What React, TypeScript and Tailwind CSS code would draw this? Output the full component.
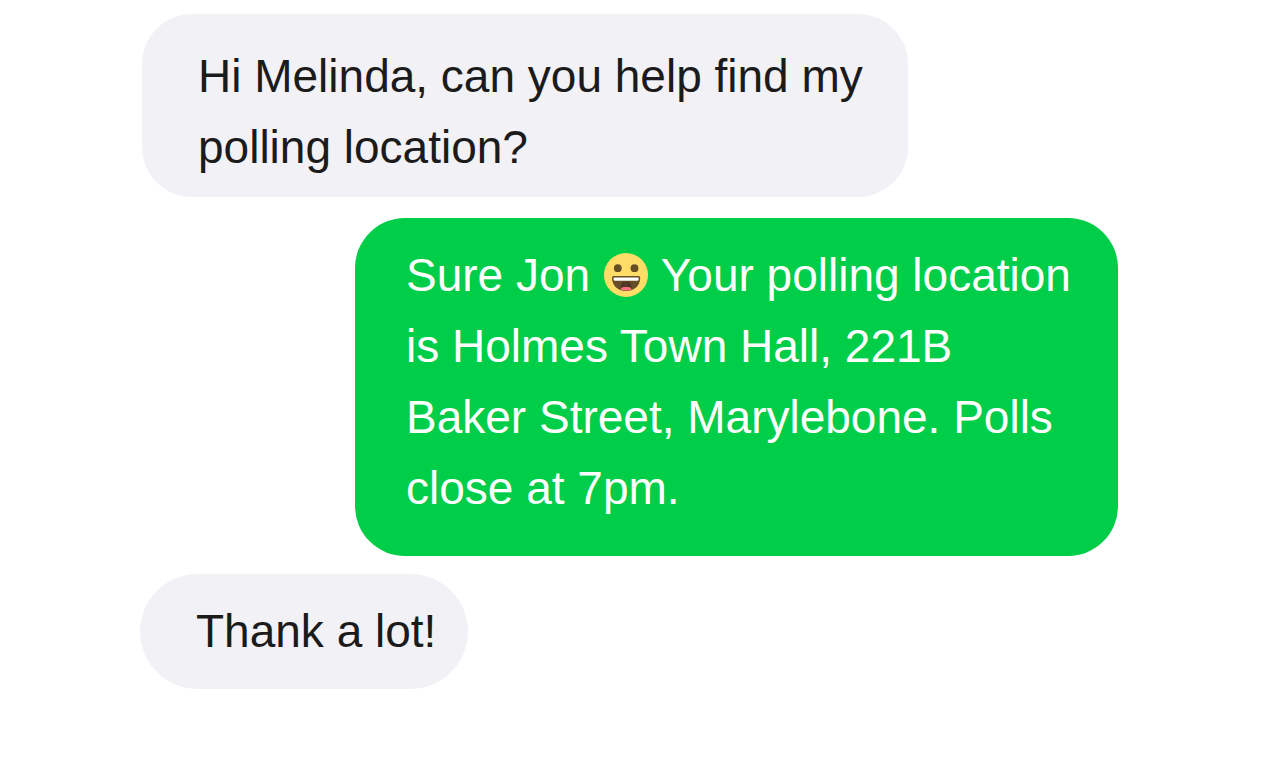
import { type ReactNode } from "react";
import clsx from "clsx";

type BubbleProps = {
  children: ReactNode;
  outgoing?: boolean;
  className?: string;
};

function GrinningFace() {
  return (
    <svg
      viewBox="0 0 44 44"
      role="img"
      aria-label="Grinning face"
      className="mx-px inline-block size-11 align-[-6px]"
    >
      <circle cx="22" cy="22" r="22" fill="#ffdd67" />
      <circle cx="13.8" cy="15.2" r="3.9" fill="#664e27" />
      <circle cx="30.5" cy="15.2" r="3.9" fill="#664e27" />
      {/* Mouth */}
      <path
        d="M9.7 23h24.7c1.1 0 1.8.7 1.8 1.8 0 7.4-5.4 13.2-14.1 13.2S8 32.2 8 24.8c0-1.1.7-1.8 1.7-1.8z"
        fill="#664e27"
      />
      <path
        d="M16.5 36.8c.2-5.6 1.700-8.200 4.200-8.200.7 0 1 .2 1.400.5.400-.3.800-.5 1.500-.5 2.400 0 4 2.600 4.200 8.200z"
        fill="#4c3526"
      />
      <path d="M22 29.2v5" stroke="#664e27" strokeWidth="0.9" />
      <path
        d="M16.5 36.6c.5-2.2 2.7-2.9 5.6-2.3 2.9-.6 5.1.1 5.7 2.3-3.4 1.3-8 1.3-11.3 0z"
        fill="#ff717f"
      />
      {/* Teeth */}
      <path
        d="M10.4 24.4h23.4c.5 0 .8.3.8.8v1.4c0 .7-.4 1.1-1 1.1h-23c-.6 0-1-.4-1-1.100v-1.400c0-.5.3-.8.8-.8z"
        fill="#fff"
      />
    </svg>
  );
}

function Bubble({ children, outgoing = false, className }: BubbleProps) {
  return (
    <li
      className={clsx(
        "text-[46px] leading-[71px]",
        outgoing ? "self-end bg-[#00ce48] text-white" : "self-start bg-[#f2f1f6] text-[#1b1b1b]",
        className,
      )}
    >
      <p>{children}</p>
    </li>
  );
}

export default function App() {
  return (
    <main className="min-h-screen bg-white pt-3.5 pr-[163px] pb-14 pl-[140px] font-['Liberation_Sans',Arial,sans-serif]">
      <ul className="flex flex-col">
        <Bubble className="ml-0.5 w-full max-w-[766px] rounded-[50px] pt-[27px] pr-8 pb-3.5 pl-14">
          Hi Melinda, can you help find my polling location?
        </Bubble>
        <Bubble
          outgoing
          className="mt-[21px] w-full max-w-[763px] rounded-[50px] pt-[22px] pr-10 pb-8 pl-[51px]"
        >
          Sure Jon <GrinningFace /> Your polling location is Holmes Town Hall, 221B Baker Street,
          Marylebone. Polls close at 7pm.
        </Bubble>
        <Bubble className="mt-[18px] rounded-full py-[22px] pr-8 pl-14">Thank a lot!</Bubble>
      </ul>
    </main>
  );
}
